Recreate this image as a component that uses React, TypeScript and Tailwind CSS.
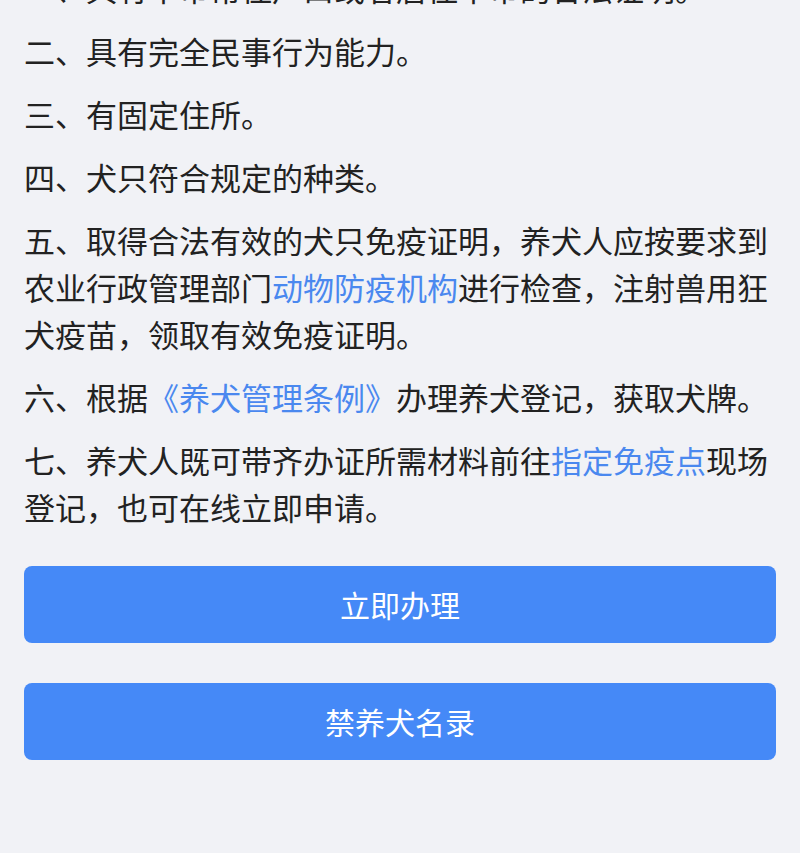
const items: { text: string; link?: string; after?: string }[] = [
  { text: "一、具有本市常住户口或者居住本市的合法证明。" },
  { text: "二、具有完全民事行为能力。" },
  { text: "三、有固定住所。" },
  { text: "四、犬只符合规定的种类。" },
  {
    text: "五、取得合法有效的犬只免疫证明，养犬人应按要求到农业行政管理部门",
    link: "动物防疫机构",
    after: "进行检查，注射兽用狂犬疫苗，领取有效免疫证明。",
  },
  { text: "六、根据", link: "《养犬管理条例》", after: "办理养犬登记，获取犬牌。" },
  { text: "七、养犬人既可带齐办证所需材料前往", link: "指定免疫点", after: "现场登记，也可在线立即申请。" },
];

const App = () => {
  return (
    <div
      className="min-h-screen bg-[#f1f2f6] px-6 overflow-hidden"
      style={{ fontFamily: '"Noto Sans CJK SC", "Noto Sans", sans-serif' }}
    >
      {/* Requirement list (first line scrolled off the top) */}
      <div className="-mt-[36px] flex flex-col gap-4">
        {items.map((item, i) => (
          <p key={i} className="text-[31px] leading-[47px] text-[#222222]">
            {item.text}
            {item.link && <span className="text-[#4a88ef]">{item.link}</span>}
            {item.after}
          </p>
        ))}
      </div>

      {/* Actions */}
      <div className="mt-9 flex flex-col gap-10">
        <button className="h-[77px] w-full rounded-lg bg-[#4589f7] text-[30px] text-white">
          立即办理
        </button>
        <button className="h-[77px] w-full rounded-lg bg-[#4589f7] text-[30px] text-white">
          禁养犬名录
        </button>
      </div>
    </div>
  );
};

export default App;
